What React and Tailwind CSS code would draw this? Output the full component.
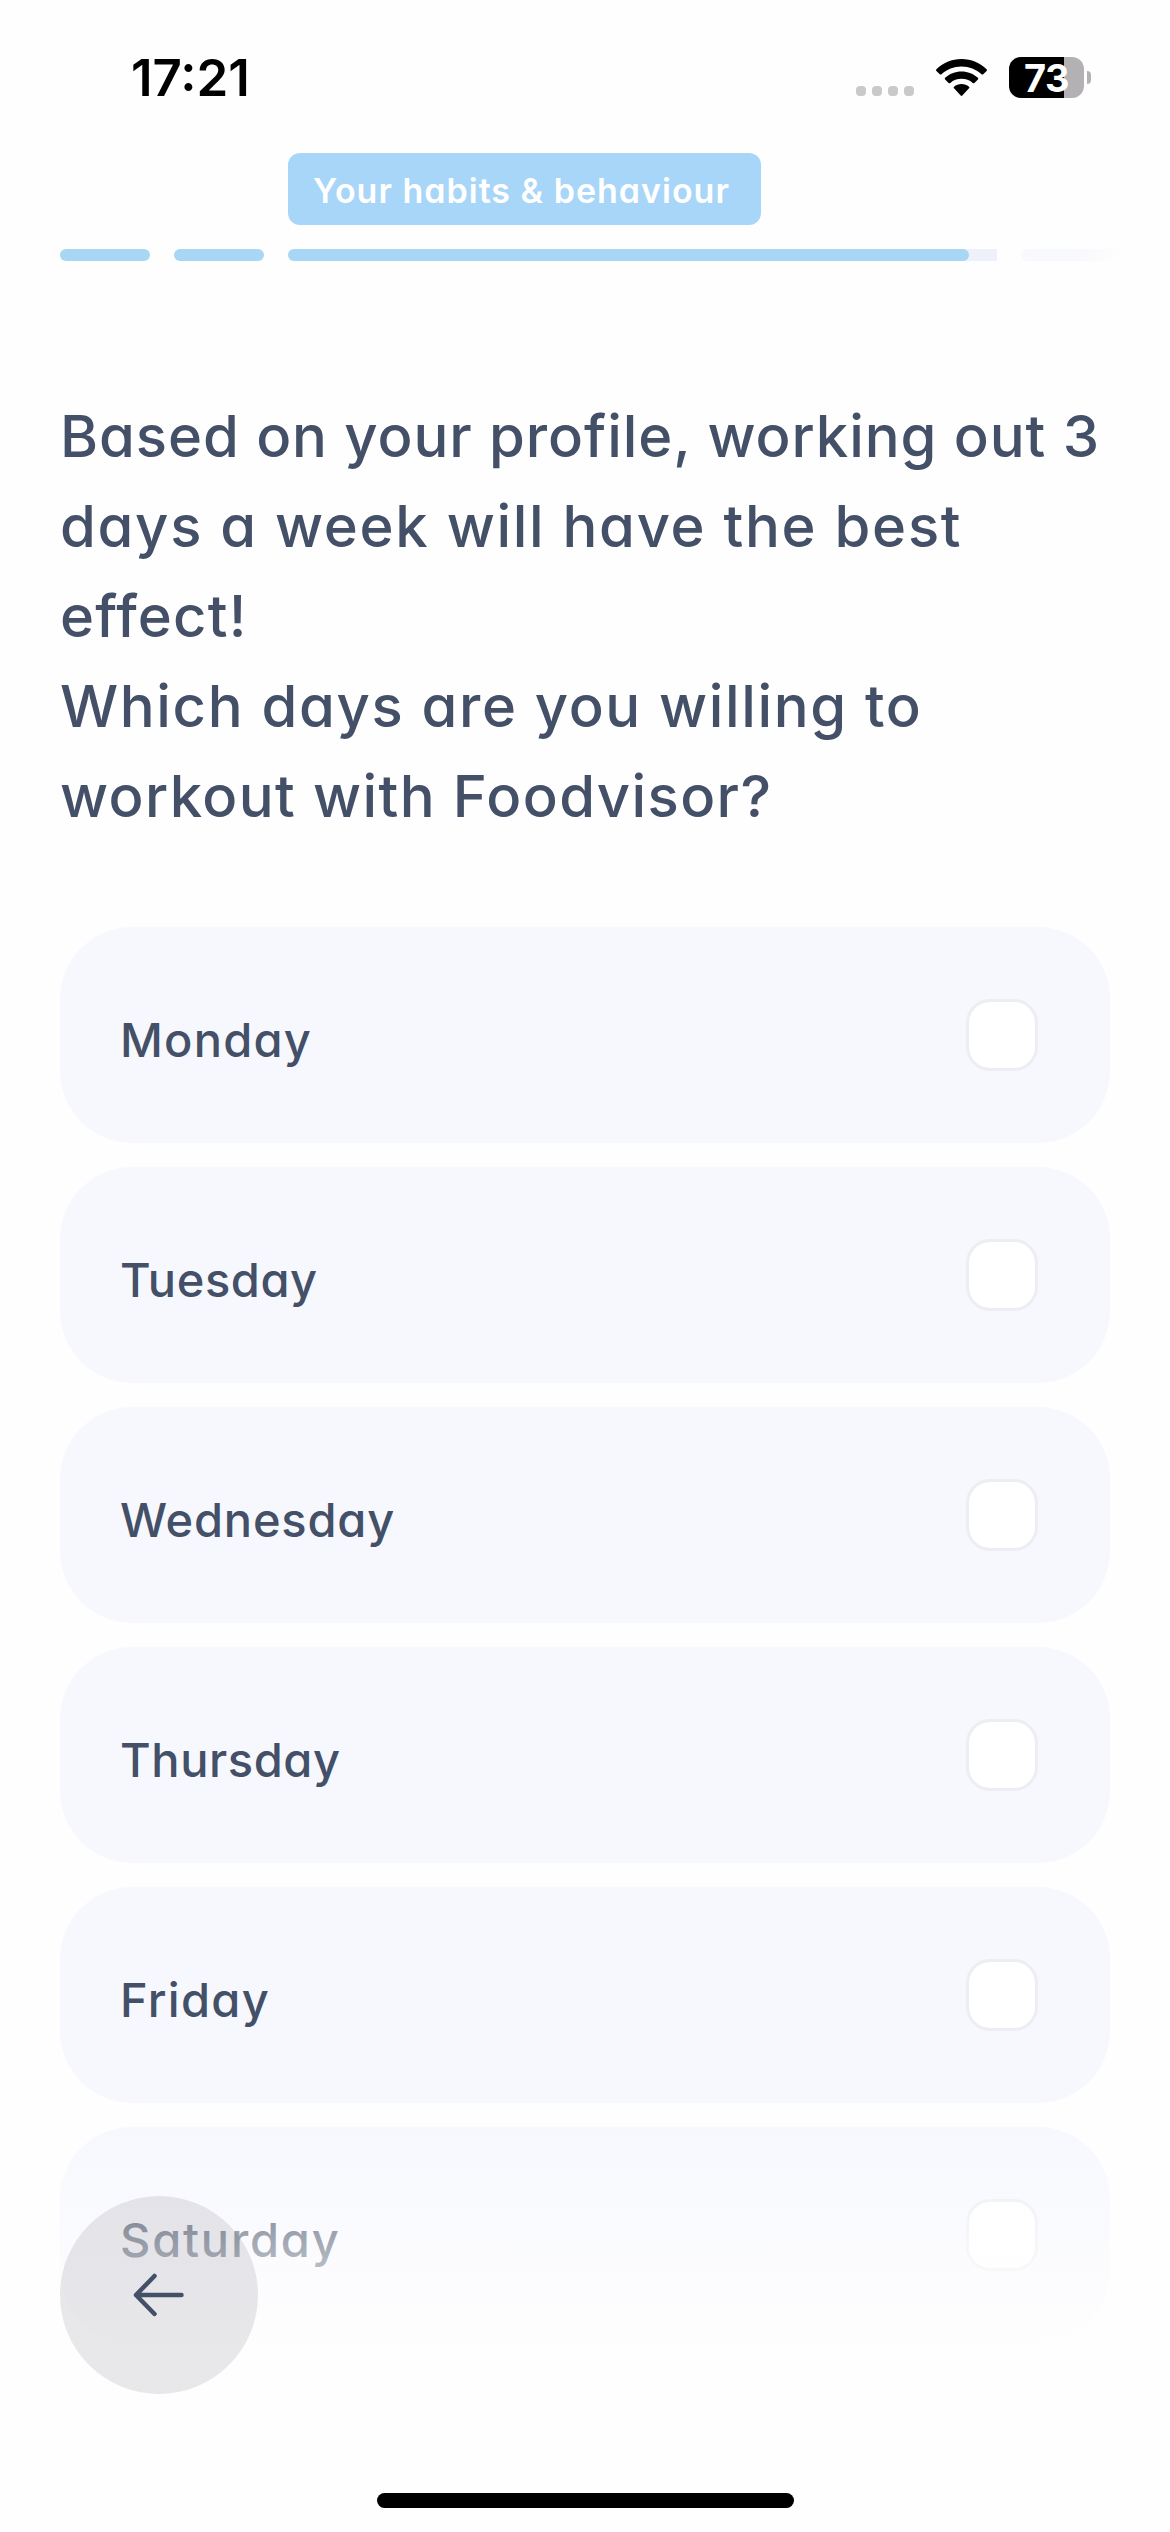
import React, { useState } from 'react';

const days = ['Monday', 'Tuesday', 'Wednesday', 'Thursday', 'Friday', 'Saturday'];

const spacing = {
  Monday: 'tracking-[1.2px]',
  Tuesday: 'tracking-[0.6px]',
  Wednesday: 'tracking-[0.8px]',
  Thursday: 'tracking-[0.6px]',
  Friday: 'tracking-[1.3px]',
  Saturday: 'tracking-[1.8px]',
};

function StatusBar() {
  return (
    <div className="flex h-[153px] items-start pt-[57px] pl-[131px] pr-[79px] text-black">
      <div className="-mt-[4px] text-[51px] leading-[50px] font-semibold tracking-[0px]">17:21</div>
      <div className="ml-auto flex items-start">
        <div className="mt-[29px] flex gap-[6px]">
          <span className="h-[10px] w-[10px] rounded-[4px] bg-[#c9c8cb]" />
          <span className="h-[10px] w-[10px] rounded-[4px] bg-[#c9c8cb]" />
          <span className="h-[10px] w-[10px] rounded-[4px] bg-[#c9c8cb]" />
          <span className="h-[10px] w-[10px] rounded-[4px] bg-[#c9c8cb]" />
        </div>
        <svg className="mt-[2px] ml-[22px] h-[37px] w-[51px]" viewBox="0 0 51 37" fill="currentColor">
          <path d="M25.5 0C35.3 0 44.2 3.8 50.6 10.2c.5.5.5 1.2 0 1.7l-3.4 3.3c-.5.5-1.2.5-1.7 0C40.3 10.3 33.2 7.4 25.5 7.4S10.7 10.3 5.5 15.2c-.5.5-1.2.5-1.7 0L.4 11.9c-.5-.5-.5-1.2 0-1.7C6.8 3.8 15.7 0 25.5 0Z" />
          <path d="M25.5 12.5c6.3 0 12.1 2.4 16.4 6.3.5.5.5 1.2 0 1.7l-3.5 3.4c-.5.5-1.2.5-1.7 0-3-2.6-6.9-4.1-11.2-4.1s-8.2 1.5-11.2 4.1c-.5.5-1.2.5-1.7 0l-3.5-3.4c-.5-.5-.5-1.2 0-1.7 4.3-3.9 10.1-6.3 16.4-6.3Z" />
          <path d="M25.5 25c2.9 0 5.5 1 7.5 2.7.5.4.5 1.1 0 1.6l-6.7 7.2c-.4.5-1.2.5-1.6 0L18 29.3c-.5-.5-.5-1.2 0-1.6 2-1.7 4.6-2.7 7.5-2.7Z" />
        </svg>
        <div className="ml-[22px] flex h-[41px] w-[75px] items-center justify-center rounded-[12px] bg-[linear-gradient(to_right,#000_55px,#b3b1b4_55px)]">
          <span className="text-[38px] leading-[48px] font-bold tracking-[-0.5px] text-white">73</span>
        </div>
        <div className="mt-[14px] ml-[3px] h-[13px] w-[4px] rounded-r-full bg-[#b3b1b4]" />
      </div>
    </div>
  );
}

function Progress() {
  return (
    <div className="pl-[60px]">
      <div className="ml-[228px] flex h-[72px] w-[473px] items-center rounded-[12px] bg-[#a8d6f8] pl-[25px]">
        <span className="pt-[4px] text-[34px] leading-[40px] font-semibold tracking-[1px] whitespace-nowrap text-white">
          Your habits &amp; behaviour
        </span>
      </div>
      <div className="mt-[24px] flex h-[12px] gap-[24px]">
        <div className="w-[90px] shrink-0 rounded-full bg-[#a8d6f5]" />
        <div className="w-[90px] shrink-0 rounded-full bg-[#a8d6f5]" />
        <div className="w-[709px] shrink-0 rounded-l-full rounded-r-[3px] bg-[#eef1fa]">
          <div className="h-full w-[681px] rounded-full bg-[#a8d6f5]" />
        </div>
        <div className="w-[100px] shrink-0 rounded-l-full bg-linear-to-r from-[#f8f9fc] from-60% to-[#fefefe]" />
      </div>
    </div>
  );
}

function Question() {
  return (
    <h1 className="mt-[130px] flex flex-col pl-[60px] text-[58px] leading-[90px] font-medium whitespace-nowrap text-[#435067]">
      <span className="tracking-[0.93px]">Based on your profile, working out 3</span>
      <span className="tracking-[1.7px]">days a week will have the best</span>
      <span className="tracking-[1.2px]">effect!</span>
      <span className="tracking-[1.65px]">Which days are you willing to</span>
      <span className="tracking-[1.4px]">workout with Foodvisor?</span>
    </h1>
  );
}

function DayOption({ day, checked, onToggle }) {
  return (
    <button
      onClick={onToggle}
      className="flex h-[216px] w-full shrink-0 items-center justify-between rounded-[72px] bg-[#f7f8fe] pr-[72px] pl-[60px]"
    >
      <span className={`pt-[10px] text-[47px] leading-[60px] font-medium text-[#435067] ${spacing[day]}`}>{day}</span>
      <span
        className={`h-[72px] w-[72px] rounded-[24px] border-[3px] border-[#edeef4] ${checked ? 'bg-[#a8d6f8]' : 'bg-white'}`}
      />
    </button>
  );
}

function App() {
  const [selected, setSelected] = useState([]);

  const toggleDay = (day) => {
    setSelected((prev) => (prev.includes(day) ? prev.filter((d) => d !== day) : [...prev, day]));
  };

  return (
    <div className="relative h-[2532px] w-[1170px] overflow-hidden bg-[#fefefe] font-['Inter',sans-serif] [font-feature-settings:'cv11']">
      <StatusBar />
      <Progress />
      <Question />
      <div className="mt-[86px] flex flex-col gap-[24px] px-[60px]">
        {days.map((day) => (
          <DayOption key={day} day={day} checked={selected.includes(day)} onToggle={() => toggleDay(day)} />
        ))}
      </div>

      {/* bottom fade with the back button and home indicator */}
      <div className="pointer-events-none absolute inset-x-0 bottom-0 h-[412px] bg-linear-to-b from-[#fefefe]/0 to-[#fefefe] to-[58%]" />
      <button className="absolute bottom-[138px] left-[60px] flex h-[198px] w-[198px] items-center justify-center rounded-full bg-[#281c34]/10">
        <svg
          className="h-[48px] w-[54px] text-[#435067]"
          viewBox="0 0 54 48"
          fill="none"
          stroke="currentColor"
          strokeWidth="4.5"
          strokeLinecap="round"
          strokeLinejoin="round"
        >
          <path d="M49.5 24H4M22.5 5L4 24L22.5 43" />
        </svg>
      </button>
      <div className="absolute bottom-[24px] left-[377px] h-[15px] w-[417px] rounded-full bg-black" />
    </div>
  );
}

export default App;
